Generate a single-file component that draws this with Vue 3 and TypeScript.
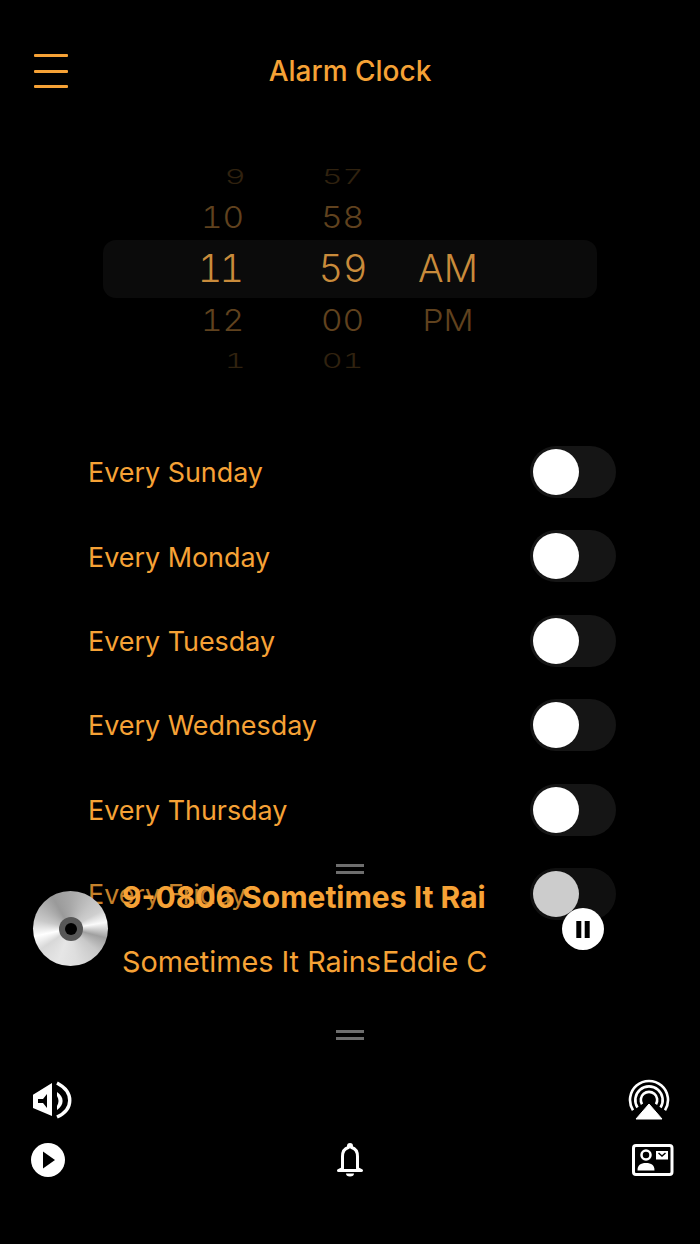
<script setup lang="ts">
const days: string[] = ['Every Sunday', 'Every Monday', 'Every Tuesday', 'Every Wednesday', 'Every Thursday', 'Every Friday']
const hours: { t: string; c: string }[] = [
  { t: '9', c: 'far' }, { t: '10', c: 'near' }, { t: '11', c: 'mid' }, { t: '12', c: 'near' }, { t: '1', c: 'far' },
]
const minutes: { t: string; c: string }[] = [
  { t: '57', c: 'far' }, { t: '58', c: 'near' }, { t: '59', c: 'mid' }, { t: '00', c: 'near' }, { t: '01', c: 'far' },
]
const ampm: { t: string; c: string }[] = [
  { t: '', c: 'far' }, { t: '', c: 'near' }, { t: 'AM', c: 'mid' }, { t: 'PM', c: 'near' }, { t: '', c: 'far' },
]
</script>

<template>
  <div class="screen">
    <header class="header">
      <div class="burger"><i></i><i></i><i></i></div>
      <h1 class="title">Alarm Clock</h1>
      <div></div>
    </header>

    <section class="picker">
      <div class="band"></div>
      <div class="col col-hour">
        <div v-for="h in hours" :key="h.t" class="cell" :class="h.c"><span>{{ h.t }}</span></div>
      </div>
      <div class="col col-min">
        <div v-for="m in minutes" :key="m.t" class="cell" :class="m.c"><span>{{ m.t }}</span></div>
      </div>
      <div class="col col-ampm">
        <div v-for="(a, i) in ampm" :key="i" class="cell" :class="a.c"><span>{{ a.t }}</span></div>
      </div>
    </section>

    <ul class="days">
      <li v-for="d in days" :key="d" class="day">
        <span>{{ d }}</span>
        <div class="toggle"><div class="knob"></div></div>
      </li>
    </ul>

    <section class="player">
      <div class="handle"><i></i><i></i></div>
      <div class="player-body">
        <div class="cd"><div class="cd-ring"><div class="cd-hole"></div></div></div>
        <div class="track">
          <div class="track-title">9-0806 Sometimes It Rains</div>
          <div class="track-sub">Sometimes It Rains<span class="artist">Eddie Cochran</span></div>
        </div>
        <button class="pause" aria-label="Pause">
          <svg width="14" height="17" viewBox="0 0 14 17"><rect x="0.3" y="0" width="5" height="17" fill="#000"/><rect x="8.7" y="0" width="5" height="17" fill="#000"/></svg>
        </button>
      </div>
      <div class="handle handle-low"><i></i><i></i></div>
    </section>

    <footer class="bottom">
      <div class="bottom-row row-one">
        <svg width="40" height="40" viewBox="0 0 40 40" fill="none">
          <path fill-rule="evenodd" d="M0 14.700 19 3v33L0 28zM5 19v4h5l4 5V14l-4 5z" fill="#fff"/>
          <path d="M24 12C31.500 17 31.500 25 24 30V26C26 23 26 19 24 16z" fill="#fff"/>
          <path d="M24 3C41 12 41 29 24 37" stroke="#fff" stroke-width="3.400"/>
        </svg>
        <svg width="42" height="42" viewBox="0 0 42 42" fill="none">
          <path d="M5 31.200A19 19 0 1 1 37 31.200" stroke="#fff" stroke-width="2.600"/>
          <path d="M9.500 28.500A13.700 13.700 0 1 1 32.500 28.500" stroke="#fff" stroke-width="2.600"/>
          <path d="M14 25.300A8.200 8.200 0 1 1 28 25.300" stroke="#fff" stroke-width="2.600"/>
          <path d="M21 25 34 40H8z" fill="#fff" stroke="#fff" stroke-width="1" stroke-linejoin="round"/>
        </svg>
      </div>
      <div class="bottom-row row-two">
        <svg width="36" height="36" viewBox="0 0 36 36">
          <circle cx="18" cy="18" r="17" fill="#fff"/>
          <path d="M13 9.500 25 18 13 26.500z" fill="#000"/>
        </svg>
        <svg class="bell" width="30" height="36" viewBox="0 0 30 36" fill="none">
          <path d="M15 2.500a1.500 1.500 0 0 1 1.500 1.500v1.500c4 1 6 4.300 6 9V26.500l4 2H3.500l4-2V14.500c0-4.700 2-8 6-9V4a1.500 1.500 0 0 1 1.500-1.500z" stroke="#fff" stroke-width="3" stroke-linejoin="round"/>
          <path d="M11 31.500h8a4 3 0 0 1-8 0z" fill="#fff"/>
        </svg>
        <svg width="42" height="32" viewBox="0 0 42 32" fill="none">
          <rect x="1.500" y="1.500" width="38.500" height="29" rx="2.500" stroke="#fff" stroke-width="3"/>
          <circle cx="14" cy="11" r="4.500" stroke="#fff" stroke-width="2.500"/>
          <path d="M5.500 26.500c0-5.500 3-7.500 8.500-7.500s8.500 2 8.500 7.500z" fill="#fff"/>
          <rect x="24" y="7" width="12" height="8.500" fill="#fff"/>
          <path d="M26.500 9l3.500 3 3.500-3" stroke="#000" stroke-width="1.500"/>
        </svg>
      </div>
    </footer>
  </div>
</template>

<style>
html, body { margin: 0; background: #000; }
</style>

<style scoped>
.screen {
  position: relative;
  width: 700px;
  height: 1244px;
  overflow: hidden;
  background: #000;
  color: #f6a236;
  font-family: Inter, "Liberation Sans", sans-serif;
  display: flex;
  flex-direction: column;
}
.header {
  height: 142px;
  display: grid;
  grid-template-columns: 1fr auto 1fr;
  align-items: center;
  padding-left: 34px;
  padding-right: 34px;
  flex: none;
}
.burger { display: flex; flex-direction: column; gap: 12.500px; width: 34px; }
.burger i { display: block; height: 3px; background: #f6a236; border-radius: 1px; }
.title { margin: 0; font-size: 28px; font-weight: 500; }

.picker {
  position: relative;
  height: 200px;
  margin-top: 26px;
  flex: none;
  overflow: hidden;
  display: flex;
  align-items: center;
  padding-left: 103px;
  font-variant-numeric: tabular-nums;
}
.band {
  position: absolute;
  left: 103px;
  top: 72px;
  width: 494px;
  height: 58px;
  border-radius: 13px;
  background: #0b0b0b;
}
.col { position: relative; display: flex; flex-direction: column; flex: none; }
.col-hour { width: 141px; align-items: flex-end; }
.col-min { width: 120px; margin-left: 39px; align-items: center; }
.col-ampm { width: 60px; margin-left: 15px; align-items: center; }
.cell { display: flex; align-items: center; justify-content: center; font-size: 38px; line-height: 1; font-weight: 300; }
.cell:nth-child(4) { transform: translateY(1px); }
.cell:nth-child(5) { transform: translateY(2px); }
.cell.mid { height: 52px; color: #c98b3b; }
.col-hour .cell.mid span { letter-spacing: -3px; margin-right: 3px; }
.cell.near { height: 50px; color: #60421e; }
.cell.near span { display: inline-block; transform: scale(0.88, 0.8); transform-origin: 100% 50%; }
.col-min .cell.near span, .col-ampm .cell.near span { transform-origin: 50% 50%; }
.cell.far { height: 30px; color: #30220f; }
.cell.far span { display: inline-block; transform: translateX(2px) scale(0.85, 0.52); transform-origin: 100% 50%; }
.col-min .cell.far span { transform: scale(0.85, 0.52); transform-origin: 50% 50%; }

.days { list-style: none; margin: 61.800px 0 0; padding: 0 84px 0 88px; flex: none; }
.day { height: 84.400px; display: flex; align-items: center; justify-content: space-between; font-size: 26.900px; font-weight: 400; }
.day > span { padding-top: 0.5px; }
.toggle {
  width: 86px;
  height: 52px;
  border-radius: 26px;
  background: #151515;
  display: flex;
  align-items: center;
  padding-left: 3px;
  box-sizing: border-box;
}
.knob { width: 46px; height: 46px; border-radius: 50%; background: #fff; }

.player {
  position: absolute;
  left: 0;
  top: 860px;
  width: 700px;
  height: 182px;
  background: rgba(0, 0, 0, 0.2);
}
.handle { position: absolute; left: 336px; top: 4px; width: 28px; display: flex; flex-direction: column; gap: 4px; }
.handle i { display: block; height: 3px; background: #6e6e6e; }
.handle-low { top: 170px; }
.player-body { position: relative; height: 182px; }
.cd {
  position: absolute;
  left: 33px;
  top: 31px;
  width: 75px;
  height: 75px;
  border-radius: 50%;
  display: flex;
  align-items: center;
  justify-content: center;
  background: conic-gradient(from 0deg, #a8a8a8 0deg, #c4c4c4 40deg, #cfcfcf 60deg, #fbfbfb 80deg, #a0a0a0 105deg, #c8c8c8 130deg, #dedede 170deg, #e6e6e6 200deg, #d8d8d8 235deg, #ffffff 258deg, #c9c9c9 285deg, #9a9a9a 330deg, #a8a8a8 360deg);
}
.cd-ring { width: 24px; height: 24px; border-radius: 50%; background: #575757; display: flex; align-items: center; justify-content: center; }
.cd-hole { width: 12px; height: 12px; border-radius: 50%; background: #000; }
.track { position: absolute; left: 122px; top: 17px; width: 365px; overflow: hidden; white-space: nowrap; }
.track-title { font-size: 30px; font-weight: 700; line-height: 40px; }
.track-sub { font-size: 28.800px; font-weight: 400; line-height: 40px; margin-top: 25px; }
.artist { margin-left: 1px; }
.pause {
  position: absolute;
  left: 562px;
  top: 48px;
  width: 42px;
  height: 42px;
  padding: 0;
  border: 0;
  border-radius: 50%;
  background: #fff;
  display: flex;
  align-items: center;
  justify-content: center;
}

.bottom { margin-top: auto; padding: 0 26px 66.500px 30px; flex: none; }
.bottom-row { display: flex; justify-content: space-between; align-items: center; }
.row-one { padding: 0 4px 0 3px; }
.row-two { margin-top: 20.500px; }
.bell { margin-left: 2px; }
</style>
